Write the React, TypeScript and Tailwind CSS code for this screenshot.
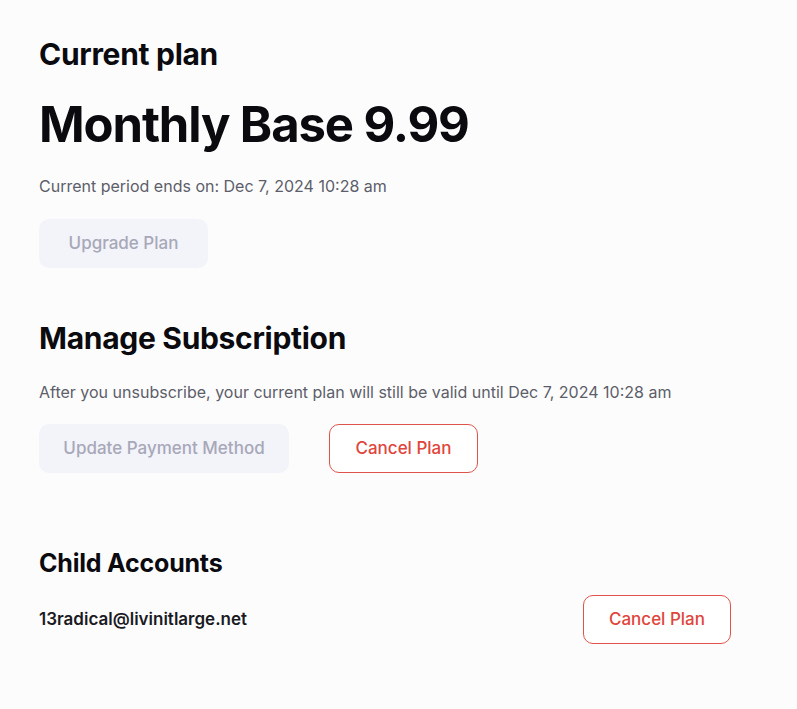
export default function App() {
  return (
    <div
      className="min-h-screen w-full bg-[#fcfcfd] px-[39px] pt-[34px] text-[#0a0a0f]"
      style={{ fontFamily: 'Inter, "Noto Sans", sans-serif' }}
    >
      {/* current plan */}
      <section className="flex flex-col items-start">
        <h2 className="text-[30px] font-bold leading-[40px] tracking-[-0.3px]">Current plan</h2>
        <h1 className="mt-[21px] text-[49px] font-bold leading-[60px] tracking-[-1.1px]">Monthly Base 9.99</h1>
        <p className="mt-[19px] text-[16px] leading-[24px] text-[#5c5e69]">
          Current period ends on: Dec 7, 2024 10:28 am
        </p>
        <button className="mt-[21px] h-[49px] w-[169px] rounded-[10px] bg-[#f3f3fa] text-[17px] font-medium text-[#a7a8b8]">
          Upgrade Plan
        </button>
      </section>

      {/* manage subscription */}
      <section className="mt-[50px] flex flex-col items-start">
        <h2 className="text-[30px] font-bold leading-[40px] tracking-[-0.3px]">Manage Subscription</h2>
        <p className="mt-[22px] text-[16px] leading-[24px] text-[#5c5e69]">
          After you unsubscribe, your current plan will still be valid until Dec 7, 2024 10:28 am
        </p>
        <div className="mt-[20px] flex gap-[40px]">
          <button className="h-[49px] w-[250px] rounded-[10px] bg-[#f3f3fa] text-[17px] font-medium text-[#a7a8b8]">
            Update Payment Method
          </button>
          <button className="h-[49px] w-[149px] rounded-[10px] border border-[#e0534a] bg-white text-[17px] font-medium text-[#e0453c]">
            Cancel Plan
          </button>
        </div>
      </section>

      {/* child accounts */}
      <section className="mt-[74px] w-[692px]">
        <h2 className="text-[25px] font-bold leading-[32px] tracking-[-0.2px]">Child Accounts</h2>
        <div className="mt-[16px] flex items-center justify-between">
          <span className="text-[17px] font-semibold text-[#1a1a22]">13radical@livinitlarge.net</span>
          <button className="h-[49px] w-[148px] rounded-[10px] border border-[#e0534a] bg-white text-[17px] font-medium text-[#e0453c]">
            Cancel Plan
          </button>
        </div>
      </section>
    </div>
  )
}
